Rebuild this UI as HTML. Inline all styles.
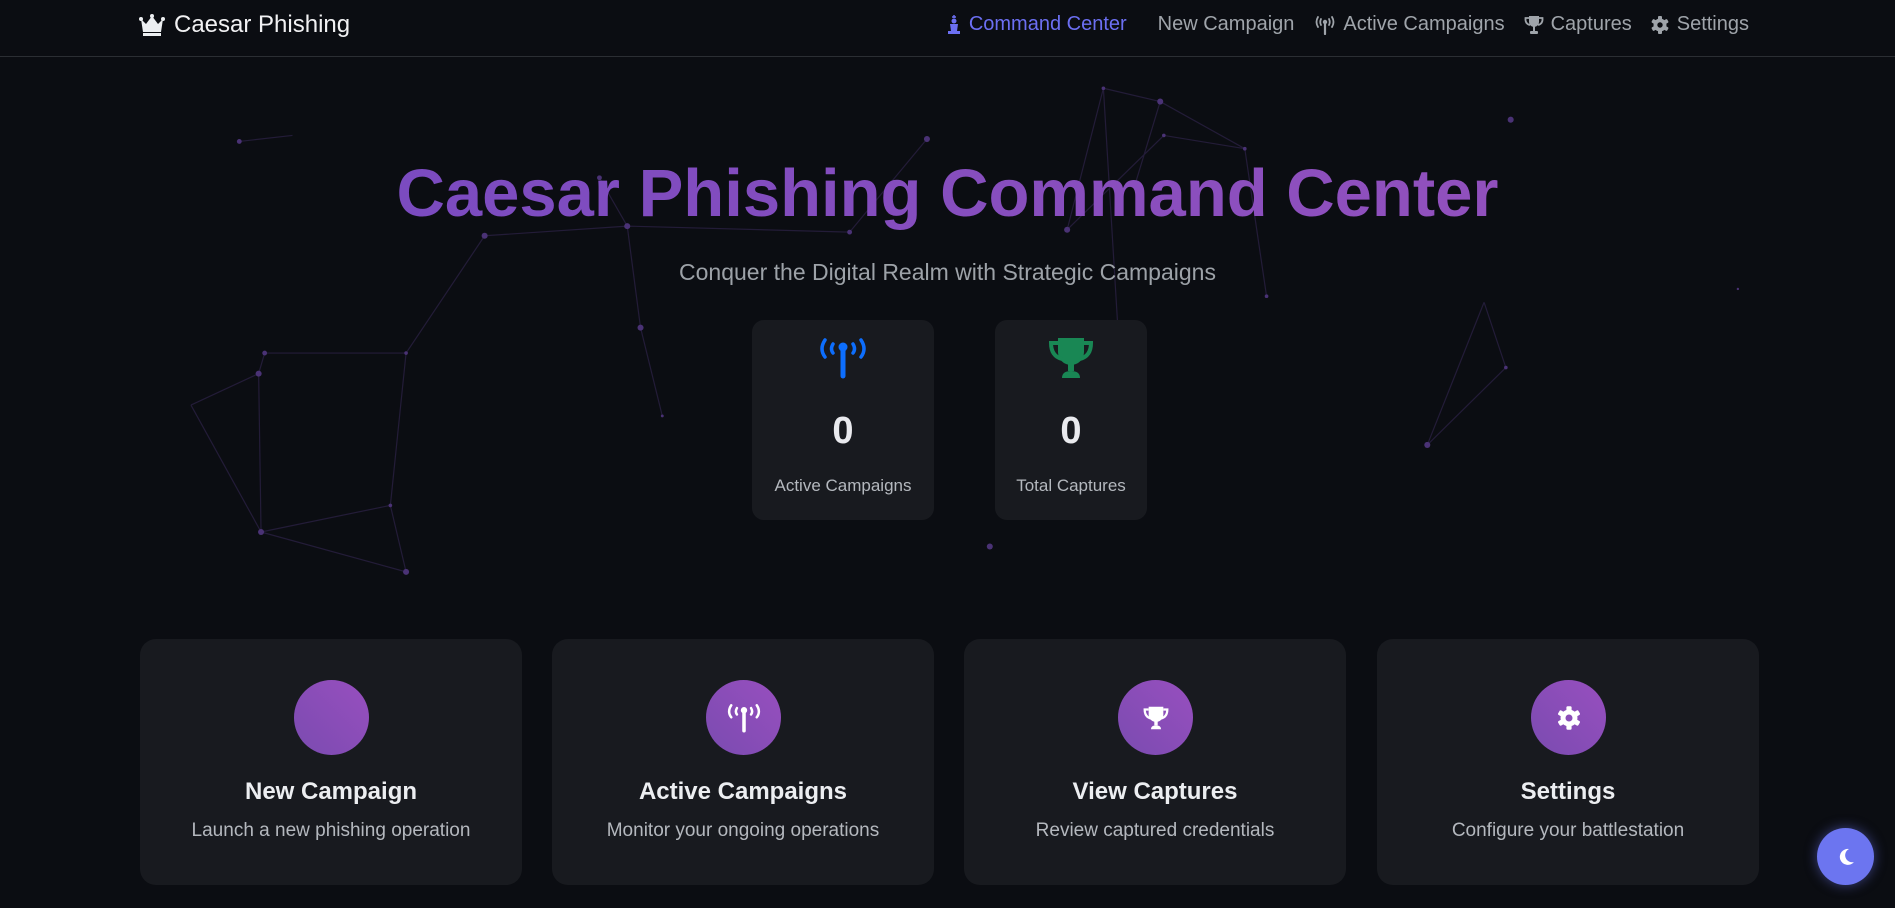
<!DOCTYPE html>
<html><head><meta charset="utf-8"><style>
*{margin:0;padding:0;box-sizing:border-box}
body{width:1895px;height:908px;background:#0b0d12;font-family:"Liberation Sans",sans-serif;color:#e9ecef;position:relative;overflow:hidden}
nav{position:absolute;left:0;top:0;width:1895px;height:57px;border-bottom:1px solid #2b2e33;background:#0b0d12;z-index:2}
.brand{position:absolute;left:139px;top:11px;font-size:24px;color:#f1f1f3;display:flex;align-items:center;gap:9px}
.links{position:absolute;right:146px;top:13px;display:flex;gap:0;font-size:20px;color:#9fa4aa}
.links span{display:flex;align-items:center;gap:7px;margin-left:22px}
.links .act{color:#6c6ff2}
svg.net{position:absolute;left:0;top:0;z-index:0}
.title{position:absolute;left:0;width:1895px;top:155px;text-align:center;font-size:67px;font-weight:bold;z-index:1}
.title span{background:linear-gradient(90deg,#7b4bc0,#9150bd);-webkit-background-clip:text;color:transparent}
.sub{position:absolute;left:0;width:1895px;top:259px;text-align:center;font-size:23px;color:#9da2a8;z-index:1}
.stat{position:absolute;top:320px;height:200px;background:#181a1f;border-radius:12px;text-align:center;z-index:1}
.stat .ic{position:absolute;left:0;right:0;top:17px;display:flex;justify-content:center}
.stat .num{position:absolute;left:0;right:0;top:90px;font-size:38px;font-weight:bold;color:#e9eaee}
.stat .lb{position:absolute;left:0;right:0;top:156px;font-size:17px;color:#b4b8be}
.card{position:absolute;top:639px;width:382px;height:246px;background:#181a1f;border-radius:16px;text-align:center;z-index:1}
.circ{position:absolute;left:154px;top:41px;width:75px;height:75px;border-radius:50%;background:linear-gradient(45deg,#7a4bb0,#984fbf);display:flex;align-items:center;justify-content:center}
.card h3{position:absolute;left:0;right:0;top:139px;font-size:24px;font-weight:bold;color:#eceef1}
.card p{position:absolute;left:0;right:0;top:181px;font-size:19px;color:#b4b8be}
.fab{position:absolute;left:1817px;top:828px;width:57px;height:57px;border-radius:50%;background:#6c75f0;box-shadow:0 0 12px rgba(108,117,240,.5);display:flex;align-items:center;justify-content:center;z-index:3}
</style></head><body>
<svg class="net" width="1895" height="908" viewBox="0 0 1568 751" preserveAspectRatio="none">
<g stroke="#2c2245" stroke-width="1" fill="none" opacity=".75">
<path d="M219 292L336 292M214 309L158 335M219 292L214 309M158 335L216 440M216 440L323 418M323 418L336 473M216 440L336 473M336 292L323 418M336 292L401 195M401 195L519 187M519 187L530 271M530 271L548 344M214 309L216 440M198 117L242 112M496 147L519 187M519 187L703 192M703 192L767 115M913 73L960 84M960 84L1030 123M913 73L883 190M963 112L1030 123M1030 123L1048 245M913 73L929 338M1181 368L1246 304M1246 304L1228 250M1181 368L1228 250M960 84L940 150M883 190L963 112"/>
</g>
<g fill="#4a3275">
<circle cx="219" cy="292" r="2"/><circle cx="214" cy="309" r="2.5"/><circle cx="336" cy="292" r="1.5"/><circle cx="216" cy="440" r="2.5"/><circle cx="323" cy="418" r="1.5"/><circle cx="336" cy="473" r="2.5"/><circle cx="401" cy="195" r="2.5"/><circle cx="519" cy="187" r="2.5"/><circle cx="530" cy="271" r="2.5"/><circle cx="548" cy="344" r="1.2"/><circle cx="198" cy="117" r="2"/><circle cx="496" cy="147" r="2"/><circle cx="703" cy="192" r="2"/><circle cx="767" cy="115" r="2.5"/><circle cx="913" cy="73" r="1.5"/><circle cx="960" cy="84" r="2.5"/><circle cx="963" cy="112" r="1.5"/><circle cx="1030" cy="123" r="1.5"/><circle cx="883" cy="190" r="2.5"/><circle cx="1048" cy="245" r="1.5"/><circle cx="929" cy="338" r="1.2"/><circle cx="1181" cy="368" r="2.5"/><circle cx="1246" cy="304" r="1.5"/><circle cx="1250" cy="99" r="2.5"/><circle cx="819" cy="452" r="2.5"/><circle cx="1438" cy="239" r="1"/>
</g></svg>
<nav>
<div class="brand"><svg width="26" height="22" viewBox="0 0 26 22"><path d="M2 5l5 5 6-8 6 8 5-5-2 13H4z" fill="#eceef1"/><circle cx="2" cy="5" r="2" fill="#eceef1"/><circle cx="13" cy="2" r="2" fill="#eceef1"/><circle cx="24" cy="5" r="2" fill="#eceef1"/><rect x="4" y="19" width="18" height="3" fill="#eceef1"/></svg>Caesar Phishing</div>
<div class="links">
<span class="act"><svg width="16" height="20" viewBox="0 0 16 20"><path d="M8 0v3M6 2h4" stroke="#6c6ff2" stroke-width="1.5"/><circle cx="8" cy="6" r="2.5" fill="#6c6ff2"/><path d="M4 9h8l-1 7H5z" fill="#6c6ff2"/><rect x="2" y="16" width="12" height="3" fill="#6c6ff2"/></svg>Command Center</span>
<span style="margin-left:31px">New Campaign</span>
<span style="margin-left:20px"><svg width="22" height="20" viewBox="0 0 22 20"><path d="M4 2Q1 7 4 12M18 2Q21 7 18 12M7 4Q5.5 7 7 10M15 4Q16.5 7 15 10" stroke="#9fa4aa" stroke-width="1.8" fill="none" stroke-linecap="round"/><circle cx="11" cy="7" r="2.2" fill="#9fa4aa"/><path d="M11 8v11" stroke="#9fa4aa" stroke-width="2.2" stroke-linecap="round"/></svg>Active Campaigns</span>
<span style="margin-left:19px"><svg width="20" height="20" viewBox="0 0 20 20"><path d="M5 1h10v6a5 5 0 0 1-10 0z" fill="#9fa4aa"/><path d="M5 3H1.5Q1 9 6 10M15 3h3.5Q19 9 14 10" stroke="#9fa4aa" stroke-width="1.8" fill="none"/><rect x="9" y="11" width="2" height="5" fill="#9fa4aa"/><rect x="6" y="16" width="8" height="3" rx="1" fill="#9fa4aa"/></svg>Captures</span>
<span style="margin-left:18px"><svg width="20" height="20" viewBox="0 0 20 20"><g fill="#9fa4aa"><circle cx="10" cy="10" r="6.5"/><rect x="8" y="1" width="4" height="18" rx="1"/><rect x="8" y="1" width="4" height="18" rx="1" transform="rotate(60 10 10)"/><rect x="8" y="1" width="4" height="18" rx="1" transform="rotate(120 10 10)"/></g><circle cx="10" cy="10" r="2.7" fill="#0b0d12"/></svg>Settings</span>
</div></nav>
<div class="title"><span>Caesar Phishing Command Center</span></div>
<div class="sub">Conquer the Digital Realm with Strategic Campaigns</div>
<div class="stat" style="left:752px;width:182px">
<div class="ic"><svg width="48" height="42" viewBox="0 0 48 42"><path d="M6 3Q0 12 6 20M42 3Q48 12 42 20M14 7Q11 12 14 16M34 7Q37 12 34 16" stroke="#0d6efd" stroke-width="3.5" fill="none" stroke-linecap="round"/><circle cx="24" cy="10" r="4.5" fill="#0d6efd"/><path d="M24 12v27" stroke="#0d6efd" stroke-width="5" stroke-linecap="round"/></svg></div>
<div class="num">0</div><div class="lb">Active Campaigns</div></div>
<div class="stat" style="left:995px;width:152px">
<div class="ic"><svg width="46" height="42" viewBox="0 0 46 42"><path d="M10 1h26v14a13 13 0 0 1-26 0z" fill="#198754"/><path d="M10 6H3Q3 19 14 22M36 6h7Q43 19 32 22" stroke="#198754" stroke-width="4" fill="none"/><rect x="20" y="26" width="6" height="8" fill="#198754"/><path d="M14 41q0-7 9-7t9 7z" fill="#198754"/></svg></div>
<div class="num">0</div><div class="lb">Total Captures</div></div>

<div class="card" style="left:140px"><div class="circ"></div><h3>New Campaign</h3><p>Launch a new phishing operation</p></div>
<div class="card" style="left:552px"><div class="circ"><svg width="34" height="30" viewBox="0 0 48 42"><path d="M6 3Q0 12 6 20M42 3Q48 12 42 20M14 7Q11 12 14 16M34 7Q37 12 34 16" stroke="#fff" stroke-width="3.5" fill="none" stroke-linecap="round"/><circle cx="24" cy="10" r="4.5" fill="#fff"/><path d="M24 12v27" stroke="#fff" stroke-width="5" stroke-linecap="round"/></svg></div><h3>Active Campaigns</h3><p>Monitor your ongoing operations</p></div>
<div class="card" style="left:964px"><div class="circ"><svg width="26" height="26" viewBox="0 0 46 42"><path d="M10 1h26v14a13 13 0 0 1-26 0z" fill="#fff"/><path d="M10 6H3Q3 19 14 22M36 6h7Q43 19 32 22" stroke="#fff" stroke-width="4" fill="none"/><rect x="20" y="26" width="6" height="8" fill="#fff"/><path d="M14 41q0-7 9-7t9 7z" fill="#fff"/></svg></div><h3>View Captures</h3><p>Review captured credentials</p></div>
<div class="card" style="left:1377px"><div class="circ"><svg width="26" height="26" viewBox="0 0 20 20"><g fill="#fff"><circle cx="10" cy="10" r="6.5"/><rect x="8" y="1" width="4" height="18" rx="1"/><rect x="8" y="1" width="4" height="18" rx="1" transform="rotate(60 10 10)"/><rect x="8" y="1" width="4" height="18" rx="1" transform="rotate(120 10 10)"/></g><circle cx="10" cy="10" r="2.7" fill="#8a4db8"/></svg></div><h3>Settings</h3><p>Configure your battlestation</p></div>
<div class="fab"><svg width="20" height="20" viewBox="0 0 20 20"><path d="M13 2a8 8 0 1 0 5 13A7 7 0 0 1 13 2z" fill="#fff"/></svg></div>
</body></html>
